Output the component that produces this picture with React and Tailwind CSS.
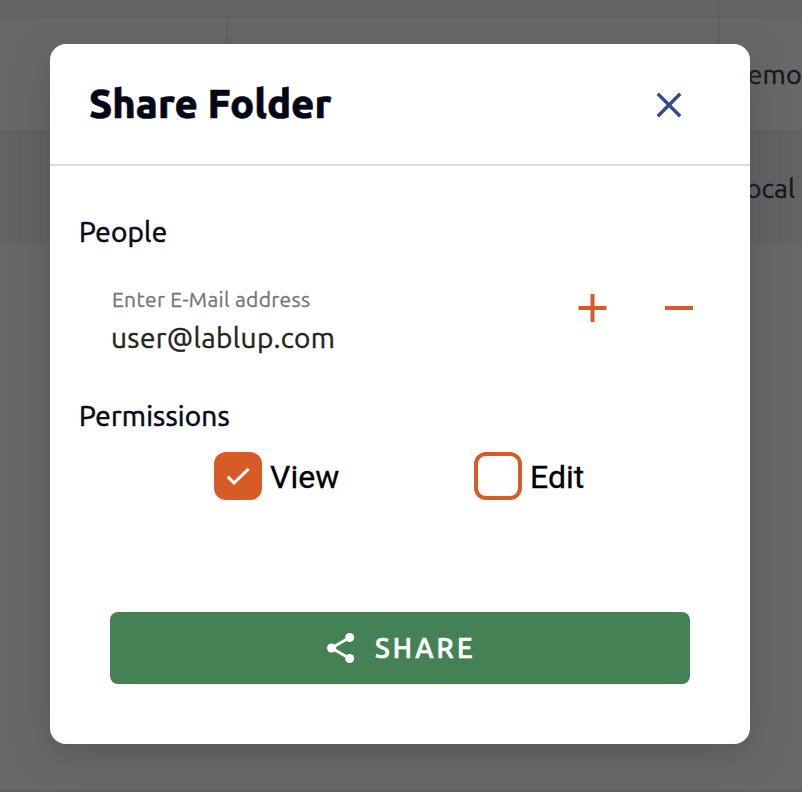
import React from "react";

function Backdrop({ children }) {
  return (
    <div className="relative h-[792px] w-[802px] overflow-hidden bg-[#686868] font-['Ubuntu','Noto_Sans',sans-serif]">
      <div className="flex h-full flex-col">
        <div className="grid h-[18px] shrink-0 grid-cols-[228px_492px_82px] border-b-2 border-[#5f6163] bg-[#646464]">
          <div className="border-r-2 border-[#5f6163]" />
          <div className="border-r-2 border-[#5f6163]" />
          <div />
        </div>
        <div className="grid h-[114px] shrink-0 grid-cols-[228px_492px_82px] border-b-2 border-[#606163]">
          <div className="border-r-2 border-[#5f6163]" />
          <div className="border-r-2 border-[#5f6163]" />
          <div className="flex items-center justify-end text-[27px] tracking-[0.2px] text-[#14181f] [-webkit-text-stroke:0.4px_#14181f]">
            demo
          </div>
        </div>
        <div className="grid h-[112px] shrink-0 grid-cols-[228px_492px_82px] bg-[#636364]">
          <div />
          <div />
          <div className="flex items-center justify-end pr-[7px] text-[27px] text-[#14181f] [-webkit-text-stroke:0.4px_#14181f]">
            local
          </div>
        </div>
        <div className="grow border-b-2 border-[#605e5f]" />
      </div>
      {children}
    </div>
  );
}

function Permission({ label, checked }) {
  return (
    <label className="flex h-12 w-[260px] items-start">
      <span
        className={
          checked
            ? "flex size-12 items-center justify-center rounded-[12px] bg-[#d65b27]"
            : "size-12 rounded-[12px] border-4 border-[#d65b27] bg-white"
        }
      >
        {checked && (
          <svg viewBox="0 0 48 48" className="size-12" fill="none" stroke="white" strokeWidth="3">
            <path d="M13.7 24.6 20 31 34.6 16.8" />
          </svg>
        )}
      </span>
      <span className="ml-2 pt-px font-['Roboto',sans-serif] text-[32px] leading-[48px] text-black [-webkit-text-stroke:0.3px_black]">
        {label}
      </span>
    </label>
  );
}

export default function App() {
  return (
    <Backdrop>
      <div className="absolute left-[50px] top-[44px] flex h-[700px] w-[700px] flex-col rounded-2xl bg-white shadow-[0_10px_36px_rgba(58,62,70,0.34)]">
        <header className="flex h-[122px] shrink-0 items-center justify-between border-b-2 border-[#dddddd] pl-[39px] pr-[68px]">
          <h2 className="text-[40px] font-extrabold leading-[48px] text-[#040716] [-webkit-text-stroke:0.6px_#040716]">
            Share Folder
          </h2>
          <svg viewBox="0 0 26 26" className="mt-[2px] size-[26px]" stroke="#334b8e" strokeWidth="3.4">
            <path d="M1.8 1.8 24.2 24.2M24.2 1.8 1.8 24.2" />
          </svg>
        </header>

        <h3 className="ml-[29px] mt-[48px] text-[28px] leading-[36px] tracking-[0.18px] text-[#040716] [-webkit-text-stroke:0.6px_#040716]">
          People
        </h3>
        <div className="mt-[35px] flex h-[81px] pl-[62px] pr-[57px]">
          <div className="w-[466px]">
            <div className="text-[21px] leading-[28px] tracking-[0.33px] text-[#757575] [-webkit-text-stroke:0.3px_#757575]">
              Enter E-Mail address
            </div>
            <div className="-ml-px mt-[7px] text-[28px] leading-[36px] tracking-[0.38px] text-[#222222] [-webkit-text-stroke:0.4px_#222222]">
              user@lablup.com
            </div>
          </div>
          <svg viewBox="0 0 29 28" className="mt-[9px] h-[28px] w-[29px]" fill="#d65b27">
            <path d="M.5 12h28v4H.5zM12.5 0h4v28h-4z" />
          </svg>
          <svg viewBox="0 0 28 28" className="ml-auto mt-[9px] size-7" fill="#d65b27">
            <path d="M0 12h28v4H0z" />
          </svg>
        </div>

        <h3 className="ml-[29px] mt-[32px] text-[28px] leading-[36px] tracking-[0.18px] text-[#040716] [-webkit-text-stroke:0.6px_#040716]">
          Permissions
        </h3>
        <div className="mt-[18px] flex pl-[164px]">
          <Permission label="View" checked />
          <Permission label="Edit" />
        </div>

        <button className="mx-[60px] mt-[112px] flex h-[72px] items-center rounded-lg bg-[#448155] pl-[217px] text-white">
          <svg viewBox="0 0 28 30" className="h-[30px] w-[28px]" fill="white">
            <path d="M4.5 15 22.7 4.5M4.5 15 22.7 25.5" fill="none" stroke="white" strokeWidth="2.8" />
            <circle cx="4.6" cy="15" r="4.6" />
            <circle cx="22.7" cy="4.5" r="4.5" />
            <circle cx="22.7" cy="25.5" r="4.5" />
          </svg>
          <span className="ml-[20px] text-[27px] font-medium leading-[36px] tracking-[3.2px] [-webkit-text-stroke:0.7px_white]">
            SHARE
          </span>
        </button>
      </div>
    </Backdrop>
  );
}
